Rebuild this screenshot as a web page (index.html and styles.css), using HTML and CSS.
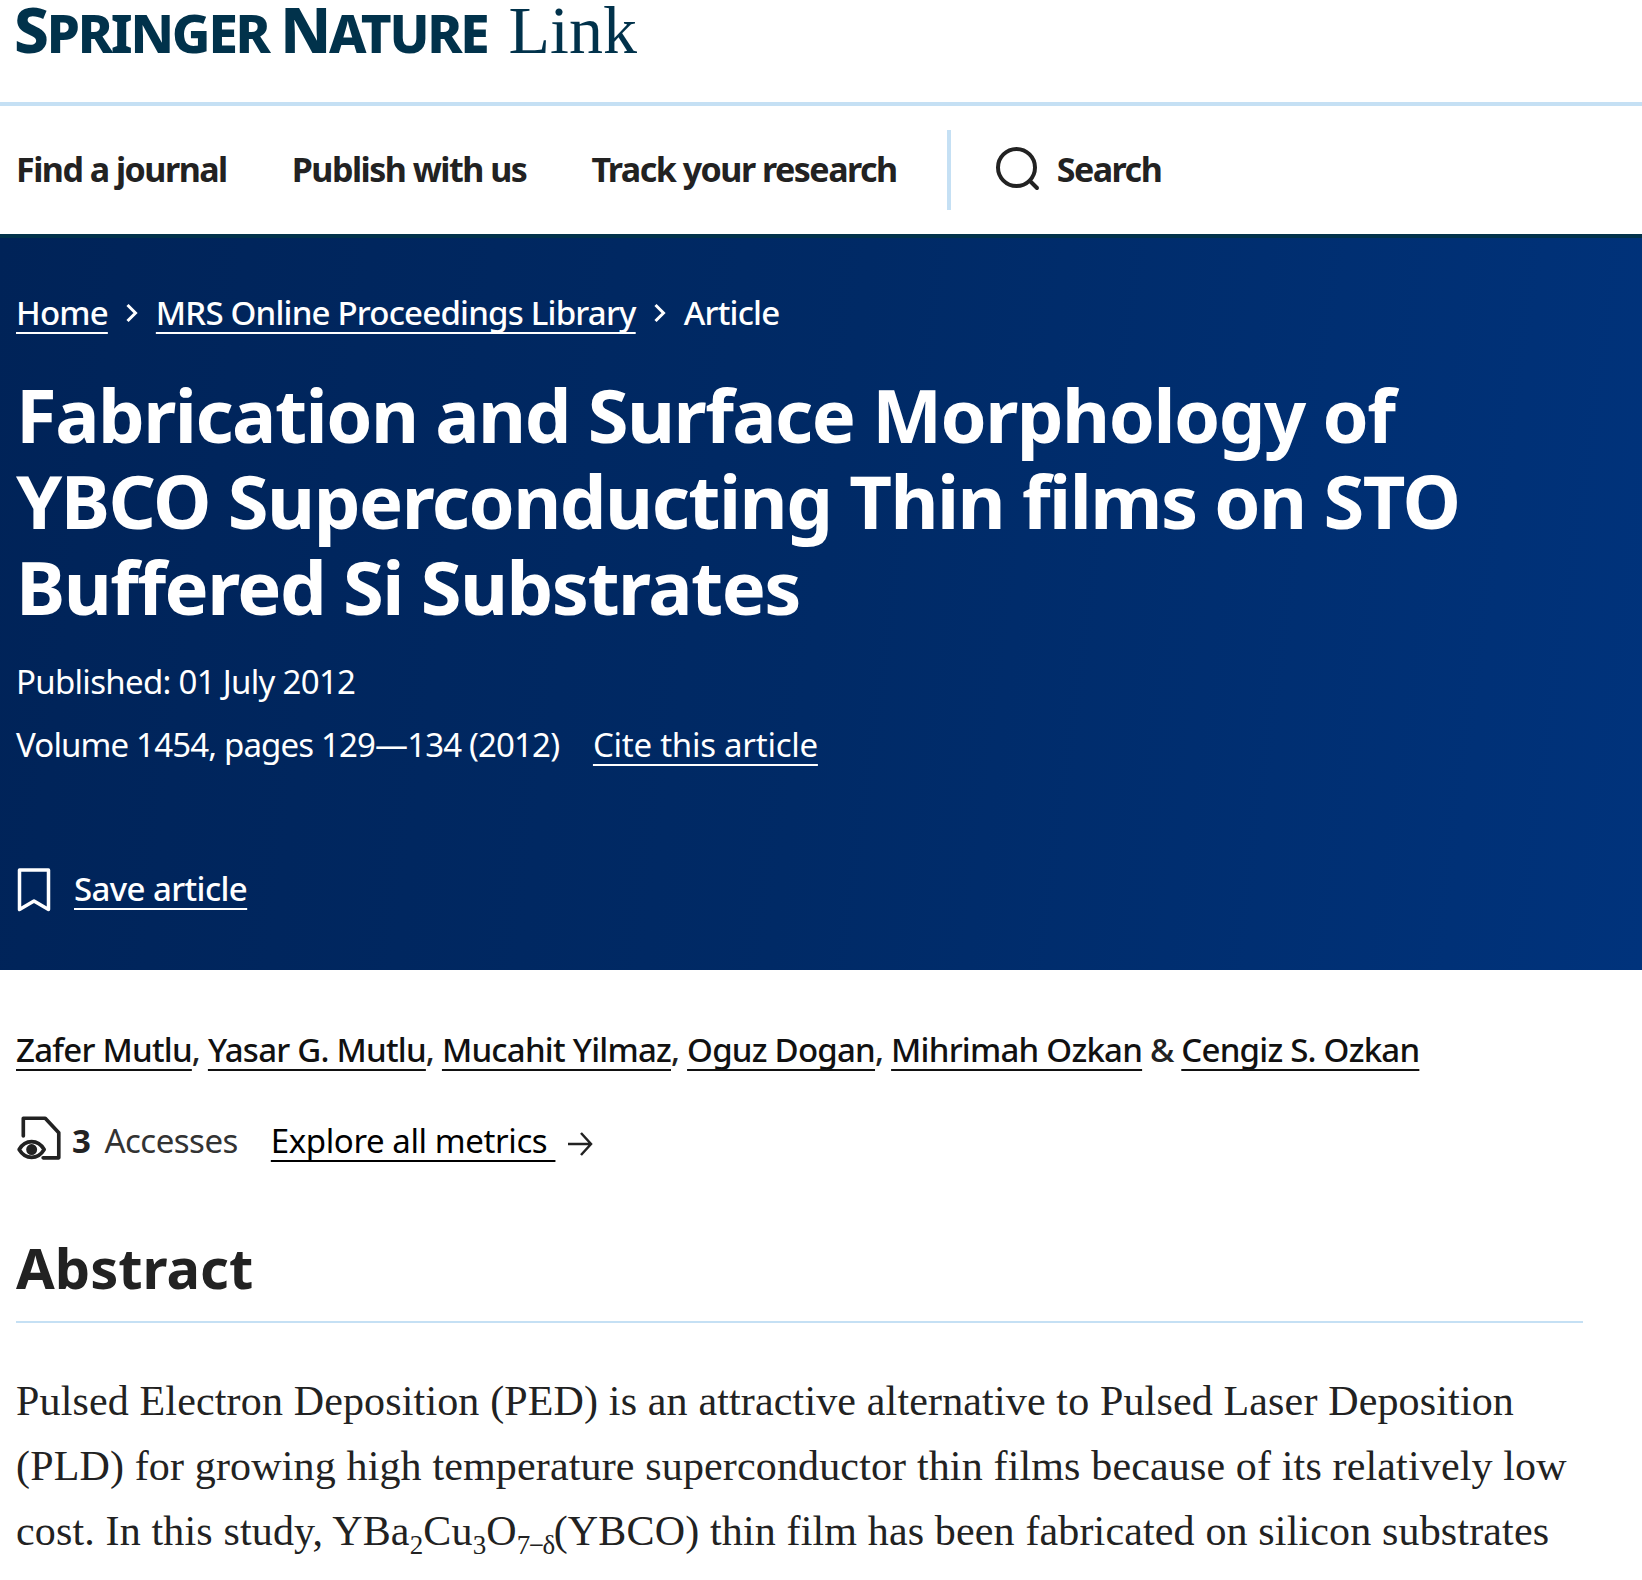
FILE: index.html
```html
<!DOCTYPE html>
<html lang="en">
<head>
  <meta charset="utf-8">
  <title>Fabrication and Surface Morphology of YBCO Superconducting Thin films on STO Buffered Si Substrates</title>
  <link rel="stylesheet" href="styles.css">
</head>
<body>
  <header class="logo-bar">
    <a class="logo" href="#"><span class="logo-brand"><span class="logo-cap">S</span>PRINGER <span class="logo-cap">N</span>ATURE</span><span class="logo-link">Link</span></a>
  </header>

  <nav class="main-nav">
    <a href="#">Find a journal</a>
    <a href="#">Publish with us</a>
    <a href="#">Track your research</a>
    <span class="nav-divider"></span>
    <a class="nav-search" href="#">
      <svg width="46" height="46" viewBox="0 0 46 46" fill="none" stroke="#222" stroke-width="4" stroke-linecap="round"><circle cx="21.500" cy="21.500" r="18.500"/><path d="M35 35l7 7"/></svg>
      Search
    </a>
  </nav>

  <section class="hero">
    <ol class="breadcrumbs">
      <li><a href="#">Home</a></li>
      <li class="crumb-sep"><svg width="14" height="20" viewBox="0 0 14 20" fill="none" stroke="#fff" stroke-width="3"><path d="M2.500 2l8 8-8 8"/></svg></li>
      <li><a href="#">MRS Online Proceedings Library</a></li>
      <li class="crumb-sep"><svg width="14" height="20" viewBox="0 0 14 20" fill="none" stroke="#fff" stroke-width="3"><path d="M2.500 2l8 8-8 8"/></svg></li>
      <li>Article</li>
    </ol>
    <h1 class="title">Fabrication and Surface Morphology of<br>YBCO Superconducting Thin films on STO<br>Buffered Si Substrates</h1>
    <p class="published">Published: 01 July 2012</p>
    <p class="volume">Volume 1454, pages 129—134 (2012) <a href="#">Cite this article</a></p>
    <div class="save">
      <svg width="34" height="44" viewBox="0 0 34 44" fill="none" stroke="#fff" stroke-width="3.500" stroke-linejoin="round"><path d="M2.500 2h29v39.500l-14.500-8.500-14.500 8.500z"/></svg>
      <a href="#">Save article</a>
    </div>
  </section>

  <main class="content">
    <p class="authors"><a href="#">Zafer Mutlu</a>, <a href="#">Yasar G. Mutlu</a>, <a href="#">Mucahit Yilmaz</a>, <a href="#">Oguz Dogan</a>, <a href="#">Mihrimah Ozkan</a> &amp; <a href="#">Cengiz S. Ozkan</a></p>
    <div class="metrics">
      <svg class="metrics-icon" width="46" height="48" viewBox="0 0 44 46" fill="none" stroke="#222" stroke-width="3.500" stroke-linecap="round" stroke-linejoin="round"><path d="M6 22V5h21l13 14v24H25"/><path d="M2 35c3-5 7-7.500 12-7.500s9 2.500 12 7.500c-3 5-7 7.500-12 7.500S5 40 2 35z"/><circle cx="14" cy="35" r="3.500" fill="#222"/></svg>
      <strong>3</strong>
      <span class="accesses">Accesses</span>
      <a class="metrics-link" href="#">Explore all metrics&nbsp;</a>
      <svg class="metrics-arrow" width="26" height="26" viewBox="0 0 26 26" fill="none" stroke="#222" stroke-width="2.500"><path d="M1 14h23M14 3l10 11-10 11"/></svg>
    </div>
    <h2 class="section-title">Abstract</h2>
    <div class="abstract">
      <p>Pulsed Electron Deposition (PED) is an attractive alternative to Pulsed Laser Deposition<br>(PLD) for growing high temperature superconductor thin films because of its relatively low<br>cost. In this study, YBa<sub>2</sub>Cu<sub>3</sub>O<sub class="sub-tight">7−δ</sub>(YBCO) thin film has been fabricated on silicon substrates</p>
    </div>
  </main>
</body>
</html>
```

FILE: styles.css
```css
html, body {
  margin: 0;
  padding: 0;
  height: 1580px;
  overflow: hidden;
}

body {
  font-family: "Noto Sans", "Open Sans", sans-serif;
  color: #222;
  background: #fff;
}

a {
  color: inherit;
  text-decoration-thickness: 2px;
  text-underline-offset: 7px;
  text-decoration-skip-ink: none;
}

.logo-bar {
  height: 102px;
  padding-left: 14px;
  border-bottom: 4px solid #c5e0f4;
}

.logo {
  display: flex;
  align-items: baseline;
  color: #01324b;
  text-decoration: none;
}

.logo-brand {
  font-size: 53px;
  font-weight: 800;
  line-height: 58px;
  letter-spacing: -2.200px;
}

.logo-cap {
  font-size: 62px;
}

.logo-link {
  margin-left: 21px;
  font-family: "Liberation Serif", serif;
  font-size: 68px;
  line-height: 58px;
}

.main-nav {
  display: flex;
  align-items: center;
  height: 130px;
  padding-left: 16px;
  padding-bottom: 2px;
  box-sizing: border-box;
  border-bottom: 2px solid #01324b;
  font-size: 34px;
  font-weight: 700;
  letter-spacing: -1.500px;
}

.main-nav a {
  margin-right: 65px;
  text-decoration: none;
}

.nav-divider {
  width: 4px;
  height: 80px;
  margin-top: 2px;
  margin-left: -15px;
  background: #c5e0f4;
}

.main-nav .nav-search {
  display: flex;
  align-items: center;
  gap: 16px;
  margin-left: 44px;
}

.hero {
  height: 734px;
  padding: 0 16px;
  box-sizing: border-box;
  overflow: hidden;
  color: #fff;
  background: linear-gradient(98deg, #002358 0%, #002a66 50%, #00337c 100%);
  border-top: 2px solid #01324b;
}

.breadcrumbs {
  display: flex;
  align-items: center;
  margin: 0;
  padding: 50px 0 0;
  list-style: none;
  font-size: 33px;
  font-weight: 500;
  line-height: 50px;
  letter-spacing: -0.800px;
}

.crumb-sep {
  display: flex;
  margin: 0 17px;
}

.title {
  margin: 34px 0 0;
  font-size: 74px;
  font-weight: 700;
  line-height: 86px;
  letter-spacing: -1.500px;
  white-space: nowrap;
}

.published,
.volume {
  margin: 0;
  font-size: 33px;
  line-height: 48px;
  letter-spacing: -0.700px;
}

.published {
  margin-top: 28px;
}

.volume {
  margin-top: 15px;
  letter-spacing: -0.850px;
}

.volume a {
  margin-left: 26px;
  letter-spacing: -0.250px;
}

.save {
  display: flex;
  align-items: center;
  gap: 23px;
  margin-top: 95px;
  font-size: 33px;
  font-weight: 500;
  letter-spacing: -0.600px;
}

.save svg {
  margin-top: 4px;
  margin-left: 1px;
}

.content {
  padding: 0 59px 0 16px;
}

.authors {
  margin: 52px 0 0;
  font-size: 33px;
  font-weight: 500;
  line-height: 56px;
  letter-spacing: -0.770px;
  white-space: nowrap;
}

.authors a {
  color: #111;
}

.metrics {
  display: flex;
  align-items: center;
  margin-top: 35px;
  font-size: 33px;
  line-height: 48px;
  letter-spacing: -0.500px;
}

.metrics-icon {
  margin-bottom: 8px;
  margin-left: 1px;
  margin-right: -2px;
}

.metrics-arrow {
  margin-top: 4px;
}

.metrics strong {
  margin-left: 11px;
}

.accesses {
  margin-left: 14px;
  color: #333;
}

.metrics-link {
  margin-left: 33px;
  margin-right: 12px;
  letter-spacing: -0.400px;
  color: #000;
}

.section-title {
  margin: 62px 0 0;
  padding-bottom: 18px;
  border-bottom: 2px solid #c5e0f4;
  font-size: 56px;
  font-weight: 700;
  line-height: 72px;
}

.abstract {
  margin-top: 46px;
  font-family: "Liberation Serif", serif;
  font-size: 42px;
  line-height: 65px;
  letter-spacing: 0.150px;
  white-space: nowrap;
}

.abstract p {
  margin: 0;
}

.abstract sub {
  font-size: 27px;
  line-height: 0;
}

.abstract .sub-tight {
  letter-spacing: -1.500px;
}
```
